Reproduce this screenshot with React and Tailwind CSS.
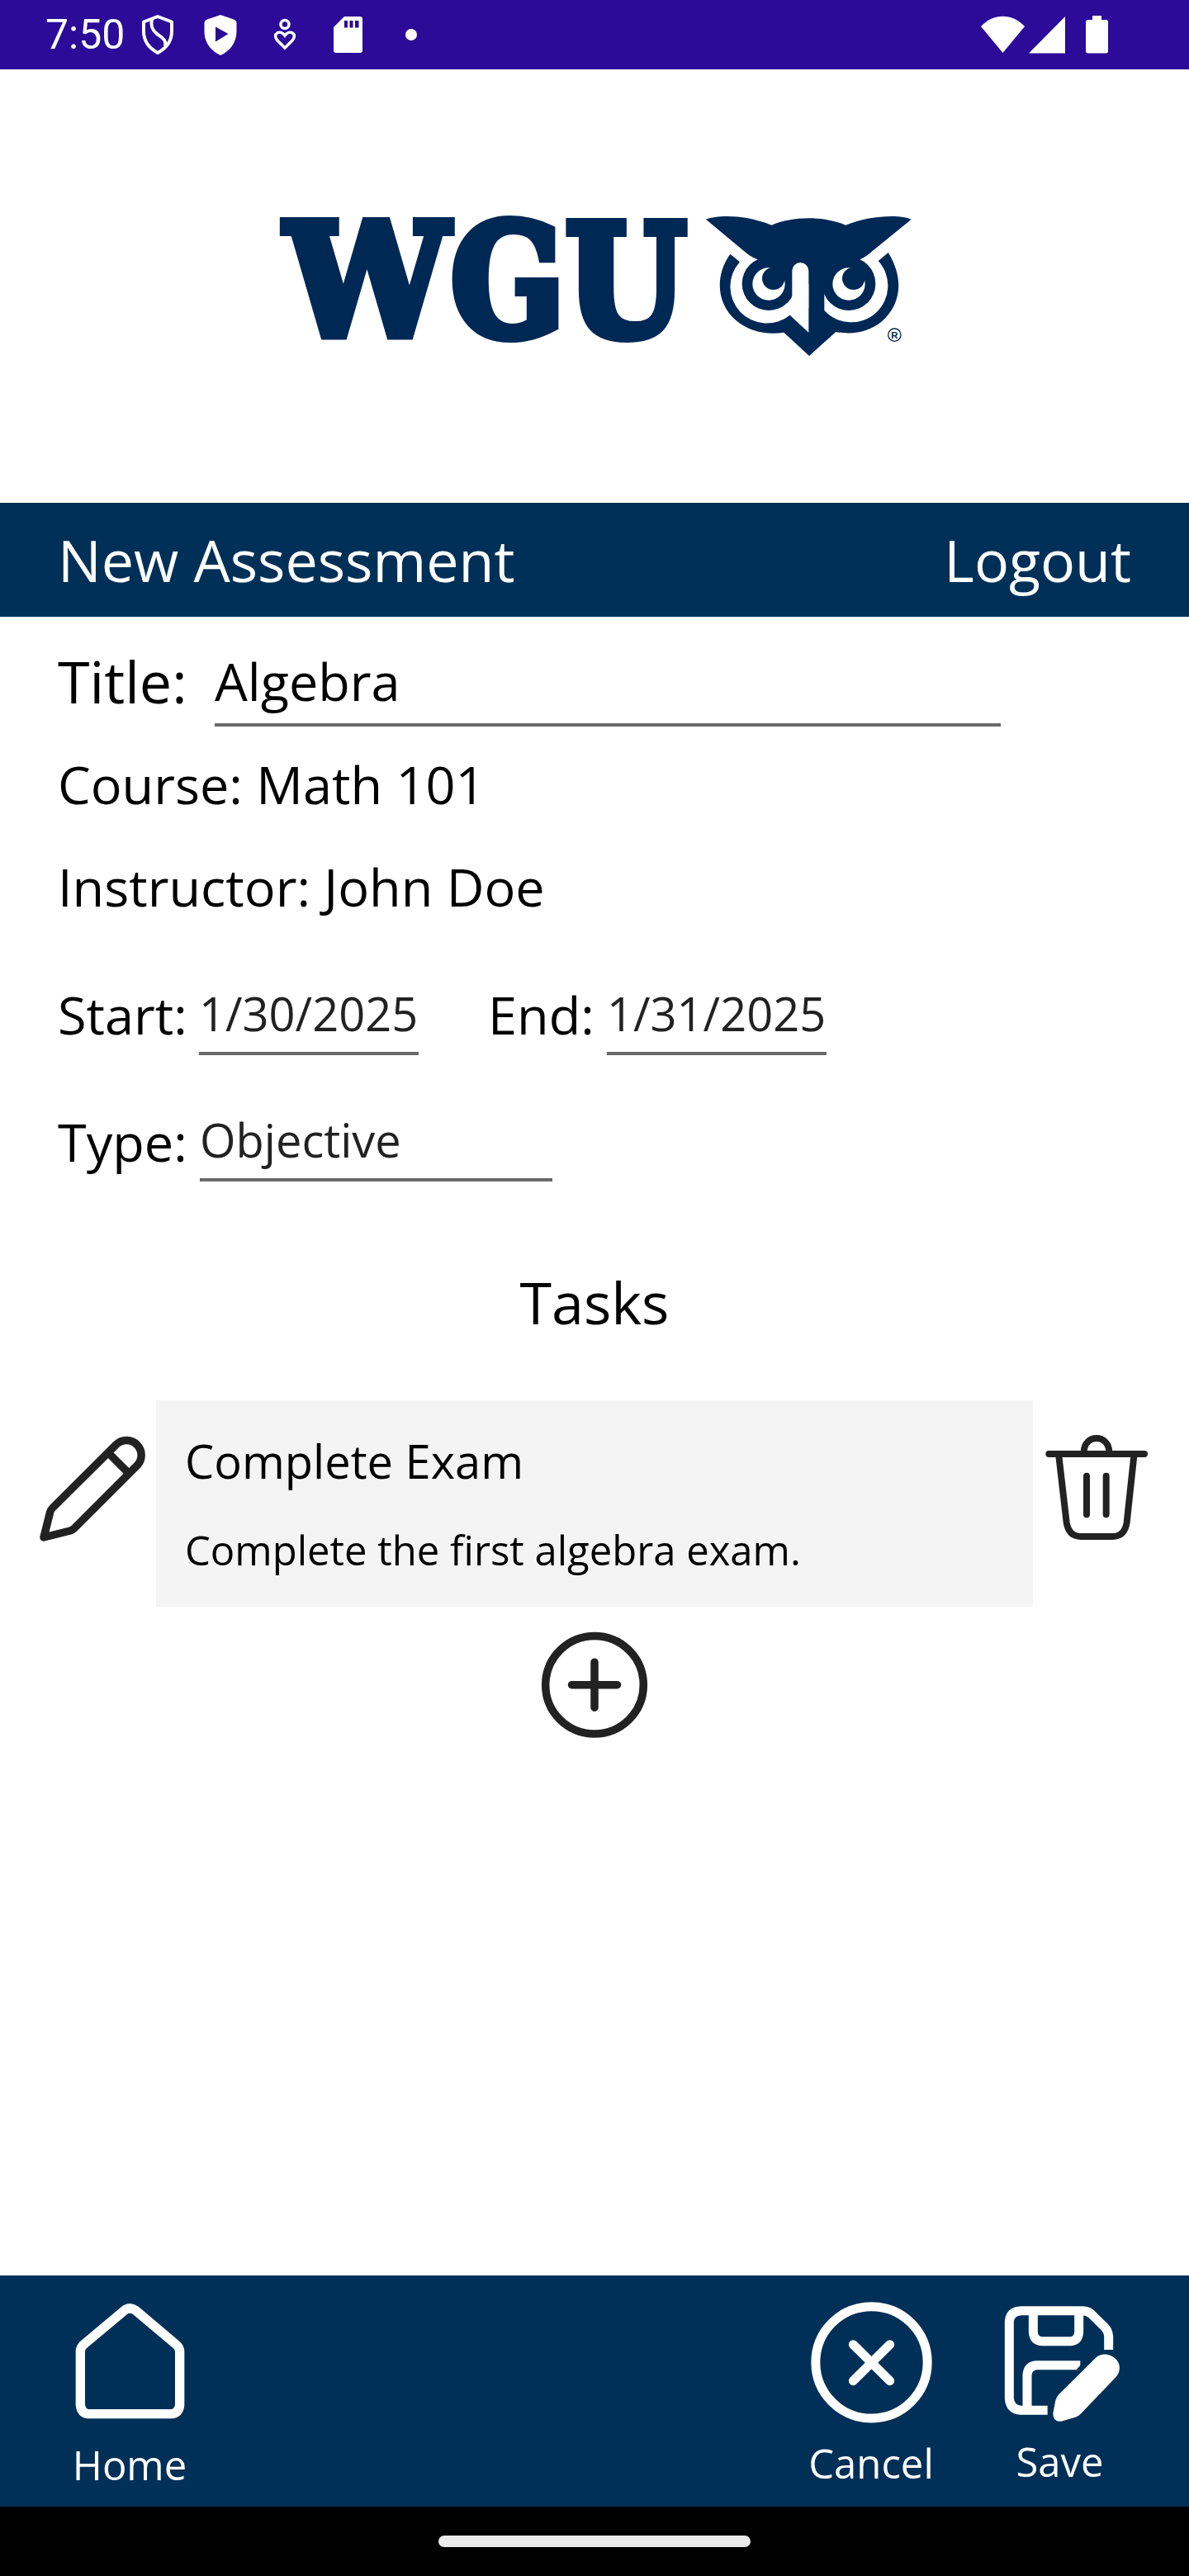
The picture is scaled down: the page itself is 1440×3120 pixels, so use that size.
const NAVY = '#002855';

function StatusBar() {
  return (
    <div className="flex h-[84px] items-center bg-[#2b0b98] pl-[55px] pr-[98px] text-white">
      <span className="w-[96px] text-[50px] leading-[84px] font-[Roboto,sans-serif]">7:50</span>
      <svg className="ml-[20px]" width="40" height="50" viewBox="0 0 40 50" fill="none" stroke="white" strokeWidth="4">
        <path d="M20 3 L37 9.5 V21 C37 33 30 41.5 20 47 C10 41.5 3 33 3 21 V9.5 Z" strokeLinejoin="round" />
        <path d="M13 6 C11 14 13 19 19 24 C26 29 31 32 29 39" />
      </svg>
      <svg className="ml-[36px]" width="40" height="50" viewBox="0 0 40 50">
        <path d="M20 1 L36 6.5 Q39.500 8 39.500 11 V21 C39.500 35 31 45 20 50 C9 45 .5 35 .5 21 V11 Q.5 8 4 6.500 Z" fill="white" />
        <path d="M14 15.500 L29.500 24 L14 33.500 Z" fill="#2b0b98" />
      </svg>
      <svg className="ml-[44px]" width="28" height="40" viewBox="0 0 28 40" fill="none" stroke="white" strokeWidth="3.600">
        <circle cx="14" cy="7.500" r="5" />
        <path d="M14 36 L4.500 26.500 C-1.500 19 8 13 14 21 C20 13 29.500 19 23.500 26.500 Z" />
      </svg>
      <svg className="ml-[45px]" width="36" height="44" viewBox="0 0 36 44">
        <path d="M13 0 H32 Q35 0 35 3 V41 Q35 44 32 44 H3 Q0 44 0 41 V13 Z" fill="white" />
        <path d="M13 5 H17 V13.500 H13 Z M19.500 5 H23.500 V13.500 H19.500 Z M26 5 H30.500 V13.500 H26 Z" fill="#2b0b98" />
      </svg>
      <span className="ml-[51px] size-[14px] rounded-full bg-white" />
      <svg className="ml-auto" width="53" height="46" viewBox="0 0 53 46" fill="white">
        <path d="M0 13 C15 -3.500 38 -3.500 53 13 L26.500 45 Z" />
      </svg>
      <svg className="ml-[5px]" width="44" height="45" viewBox="0 0 44 45" fill="white">
        <path d="M44 0 V44.500 H0 Z" />
      </svg>
      <svg className="ml-[25px]" width="27" height="46" viewBox="0 0 27 46" fill="white">
        <path d="M8 0 H19 V5 H24.500 Q27 5 27 7.500 V43 Q27 45.500 24.500 45.500 H2.500 Q0 45.500 0 43 V7.500 Q0 5 2.500 5 H8 Z" />
      </svg>
    </div>
  );
}

function Logo() {
  return (
    <div className="flex h-[525px] items-start bg-white pl-[330px] pt-[126px]">
      <svg width="510" height="270" viewBox="330 210 510 270">
        <text
          y="406.300"
          fontSize="187"
          fontWeight="700"
          fontFamily="'DejaVu Serif', serif"
          fill={NAVY}
          stroke={NAVY}
          strokeWidth="12"
        >
          <tspan x="346" textLength="197" lengthAdjust="spacingAndGlyphs">W</tspan>
          <tspan x="546" textLength="138" lengthAdjust="spacingAndGlyphs">G</tspan>
          <tspan x="685" textLength="146" lengthAdjust="spacingAndGlyphs">U</tspan>
        </text>
      </svg>
      <svg className="mt-[30px]" width="290" height="200" viewBox="0 0 870 600" fill={NAVY}>
        <path d="M45 77 C90 62 180 58 283 98 C360 64 475 64 552 98 C640 62 750 58 791 77 L650 192 Q625 215 605 222 L564 311 H273 L232 222 Q212 216 190 198 Z" />
        <path d="M133 203 C75 285 85 385 155 445 C205 488 270 497 328 488 L420 573 L517 486 C580 498 640 485 685 447 C755 385 765 290 707 198 L671 228 A133 133 0 0 1 475 408 V250 H418 V488 L350 425 A133 133 0 0 1 168 232 Z" />
        <circle cx="273" cy="311" r="97" />
        <circle cx="564" cy="311" r="97" />
        <path d="M358 400 V264 A30 30 0 0 1 418 264 V400 Z" fill="white" />
        <circle cx="273" cy="312" r="59" fill="white" />
        <circle cx="564" cy="312" r="59" fill="white" />
        <circle cx="290" cy="292" r="41" />
        <circle cx="581" cy="292" r="41" />
        <circle cx="730" cy="497" r="23" fill="none" stroke={NAVY} strokeWidth="4" />
        <text x="730" y="509" textAnchor="middle" fontSize="34" fontWeight="700" fontFamily="'Liberation Sans', sans-serif">R</text>
      </svg>
    </div>
  );
}

function Pencil() {
  return (
    <svg className="ml-[42px] mt-[38px] shrink-0" width="140" height="140" viewBox="0 0 140 140" fill="none" stroke="#222" strokeWidth="9.500" strokeLinejoin="round">
      <path d="M11 128 L18.500 98 Q19 95 22 92 L99 15.400 A17.900 17.900 0 0 1 124.300 40.700 L48 117 Q46 119 43 120 Z" />
      <path d="M89 25.500 L114.500 51" />
    </svg>
  );
}

function Trash() {
  return (
    <svg className="ml-[9px] mt-[38px] shrink-0" width="140" height="140" viewBox="0 0 420 420" fill="none" stroke="#222" strokeWidth="24" strokeLinecap="round">
      <path d="M31 81 H378" />
      <path d="M67 88 L95 330 Q103 381 148 381 H262 Q306 381 314 330 L340 88" />
      <path d="M158 75 C158 7 250 7 250 75" />
      <path d="M168 161 V301 M239 161 V301" />
    </svg>
  );
}

function Field({ className, children }) {
  return <div className={'border-b-4 border-[#6a6a6a] ' + className}>{children}</div>;
}

export default function App() {
  return (
    <div className="flex h-[3120px] w-[1440px] flex-col bg-white text-black font-['Open_Sans',sans-serif] whitespace-nowrap">
      <StatusBar />
      <Logo />
      <header className="flex h-[138px] items-center justify-between bg-[#003057] px-[70px] text-[70px] leading-[138px] text-white">
        <span>New Assessment</span>
        <span>Logout</span>
      </header>

      <main className="flex flex-1 flex-col pt-[23px]">
        <div className="flex h-[110px] items-center pl-[70px]">
          <span className="w-[190px] text-[70px] leading-[110px]">Title:</span>
          <Field className="h-[110px] w-[952px] pt-[4px] text-[63px] leading-[102px]">Algebra</Field>
        </div>
        <div className="mt-[27px] pl-[70px] text-[63px] leading-[86px]">Course: Math 101</div>
        <div className="mt-[38px] pl-[70px] text-[63px] leading-[86px]">Instructor: John Doe</div>
        <div className="mt-[62px] flex h-[99px] pl-[70px]">
          <span className="w-[171px] text-[63px] leading-[99px]">Start:</span>
          <Field className="w-[266px] pt-px text-[56px] leading-[94px] text-[#222]">1/30/2025</Field>
          <span className="ml-[84px] w-[144px] text-[63px] leading-[99px]">End:</span>
          <Field className="w-[266px] pt-px text-[56px] leading-[94px] text-[#222]">1/31/2025</Field>
        </div>
        <div className="mt-[54px] flex h-[99px] pl-[70px]">
          <span className="w-[172px] text-[63px] leading-[101px]">Type:</span>
          <Field className="w-[427px] pt-px text-[56px] leading-[95px] text-[#222]">Objective</Field>
        </div>
        <h2 className="mt-[98px] text-center text-[70px] leading-[96px]">Tasks</h2>

        <div className="mt-[71px] flex h-[250px]">
          <Pencil />
          <div className="ml-[7px] w-[1062px] bg-[#f4f4f4] pl-[35px] pt-[35px]">
            <div className="text-[56px] leading-[76px]">Complete Exam</div>
            <div className="mt-[37px] text-[49px] leading-[66px]">Complete the first algebra exam.</div>
          </div>
          <Trash />
        </div>

        <svg className="mt-[24px] self-center" width="140" height="140" viewBox="0 0 140 140" fill="none" stroke="#222" strokeWidth="9.500" strokeLinecap="round">
          <circle cx="70" cy="70.700" r="59.300" />
          <path d="M42.500 70.700 H97.500 M70 43.200 V98.200" />
        </svg>
      </main>

      <nav className="flex h-[280px] items-start bg-[#003057] pl-[87px] pr-[81px] text-[49px] leading-[66px] text-white">
        <div className="flex w-[140px] flex-col items-center pt-[31px]">
          <svg width="140" height="144" viewBox="261 141 420 432" fill="none" stroke="white" strokeWidth="34">
            <path d="M292 325 Q292 310 303 300 L452 175 Q472 160 493 175 L641 300 Q653 310 653 325 V518 Q650 548 624 551 H320 Q295 548 292 518 Z" />
          </svg>
          <span className="mt-[21px]">Home</span>
        </div>
        <div className="ml-auto flex w-[150px] flex-col items-center pt-[30px]">
          <svg width="150" height="150" viewBox="120 138 450 450" fill="none" stroke="white" strokeWidth="33" strokeLinecap="round">
            <circle cx="346.500" cy="364" r="203" />
            <path d="M280 299 L413 431 M413 299 L280 431" />
          </svg>
          <span className="mt-[14px]">Cancel</span>
        </div>
        <div className="ml-[78px] flex w-[151px] flex-col items-center pt-[34px]">
          <svg width="151" height="146" viewBox="804 150 453 438" fill="none" stroke="white" strokeWidth="33">
            <path d="M986 538 H890 Q850 535 847 495 V215 Q850 178 890 176 H1115 Q1133 177 1145 188 L1193 235 Q1207 249 1208 270 V318" />
            <path d="M934 180 V255 Q937 285 965 287 H1070 Q1097 285 1100 255 V180" />
            <path d="M912 535 V410 Q914 377 945 374 H1105" />
            <path d="M1090 391 L1121 358 H1145 V391 Z" fill="#003057" stroke="none" />
            <path d="M1161 347 C1185 325 1218 334 1236 353 C1252 371 1252 398 1234 418 L1106 551 Q1099 559 1087 563 L1035 578 Q1005 580 1006 548 L1015 502 Q1018 489 1028 479 Z" fill="white" stroke="none" />
          </svg>
          <span className="mt-[12px]">Save</span>
        </div>
      </nav>
      <div className="flex h-[84px] items-center justify-center bg-black">
        <div className="h-[14px] w-[378px] rounded-full bg-[#ebebeb]" />
      </div>
    </div>
  );
}
